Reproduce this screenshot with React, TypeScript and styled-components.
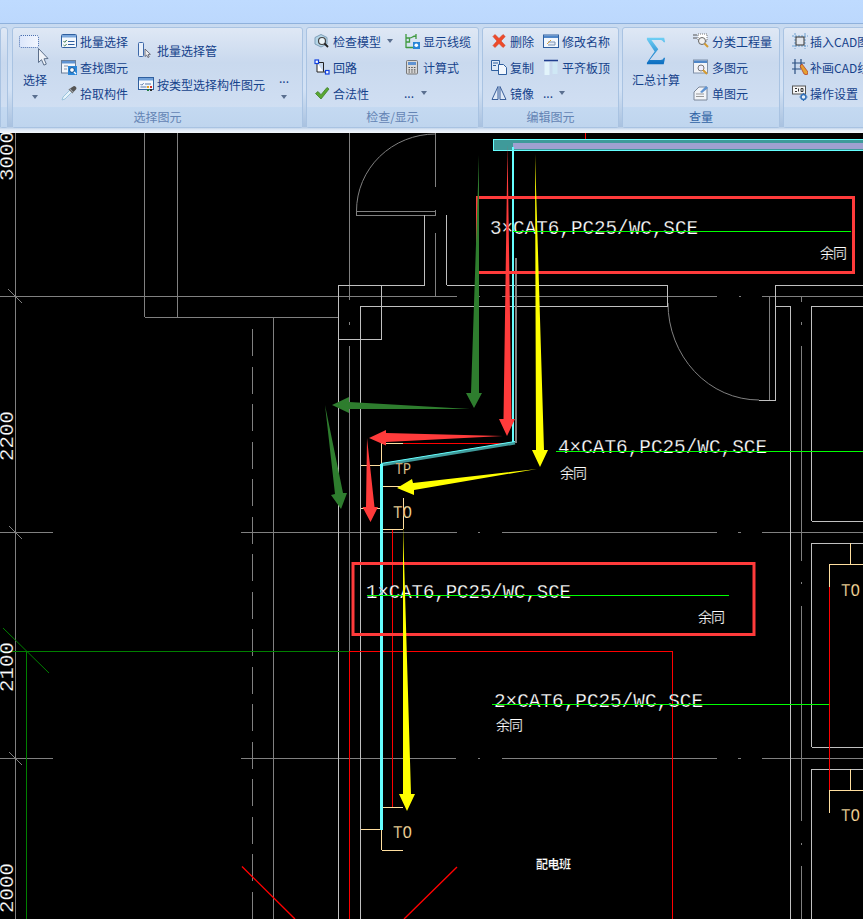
import React from 'react';
import styled, { createGlobalStyle } from 'styled-components';

const Global = createGlobalStyle`
  html, body { margin: 0; padding: 0; background: #000; }
  body { font-family: "Noto Sans CJK SC", "Liberation Sans", sans-serif; }
`;

const Page = styled.div`
  width: 863px; height: 919px; overflow: hidden;
  display: flex; flex-direction: column; background: #000;
`;
const TopBand = styled.div`
  height: 24px; flex: none;
  background: linear-gradient(#bfdbff, #bcd8fd);
  border-bottom: 1px solid #8fb1dc;
  box-sizing: border-box;
`;
const Ribbon = styled.div`
  height: 109px; flex: none; box-sizing: border-box;
  padding-top: 3px; display: flex; gap: 3px; overflow: hidden;
  background: linear-gradient(#c8daf0, #d3e2f5 60%, #a9c2e0 94%, #dfe9f6 97%, #f4f7fb);
`;
const Group = styled.section<{ $w: number; $mr?: number }>`
  width: ${p => p.$w}px; flex: none; height: 101px; box-sizing: border-box;
  margin-right: ${p => p.$mr ?? 0}px;
  display: flex; flex-direction: column;
  border: 1px solid #a9c3e2; border-radius: 3px;
  background: linear-gradient(#dfe8f5, #c9d9ee 35%, #d3e1f4);
`;
const GroupBody = styled.div`
  height: 79px; flex: none; display: flex; box-sizing: border-box;
`;
const GroupTitle = styled.div<{ $dark?: boolean }>`
  flex: 1; display: flex; align-items: center; justify-content: center;
  background: linear-gradient(#c4d9f1, #bfd5ee);
  color: ${p => (p.$dark ? '#2f62a4' : '#6484b4')}; font-size: 12px; line-height: 20px;
`;
const Column = styled.div<{ $ml: number; $top?: number; $gap?: number }>`
  display: flex; flex-direction: column; flex: none;
  margin-left: ${p => p.$ml}px;
  padding-top: ${p => p.$top ?? 0}px;
  gap: ${p => p.$gap ?? 0}px;
`;
const Item = styled.div<{ $gap?: number }>`
  height: 26px; display: flex; align-items: center;
  gap: ${p => p.$gap ?? 3}px;
  color: #15428b; font-size: 12px; white-space: nowrap;
  svg { flex: none; }
`;
const LargeButton = styled.div<{ $w: number; $ml: number }>`
  width: ${p => p.$w}px; margin-left: ${p => p.$ml}px; flex: none;
  display: flex; flex-direction: column; align-items: center;
  color: #15428b; font-size: 12px;
`;
const LargeIcon = styled.div<{ $pt?: number }>`
  height: 36px; box-sizing: border-box; margin-top: 7px;
  padding-top: ${p => p.$pt ?? 0}px;
  display: flex; align-items: flex-start; justify-content: center;
`;
const LargeLabel = styled.div`
  height: 18px; line-height: 18px; white-space: nowrap;
`;
const Caret = styled.i<{ $m?: number; $t?: number }>`
  display: block; width: 0; height: 0; flex: none;
  margin-left: ${p => p.$m ?? 0}px;
  margin-top: ${p => p.$t ?? 0}px;
  border-left: 3.5px solid transparent; border-right: 3.5px solid transparent;
  border-top: 4px solid #5a6f8f;
`;
const Dots = styled.span`
  display: block; line-height: 12px; color: #15428b;
`;
const MoreCol = styled.div<{ $ml: number }>`
  margin-left: ${p => p.$ml}px; flex: none; width: 12px; padding-top: 44px;
  display: flex; flex-direction: column; align-items: center; gap: 11px;
  color: #15428b; font-size: 12px;
`;
const Canvas = styled.svg`
  display: block; flex: 1; width: 863px; min-height: 0; background: #000;
`;

/* ---------- ribbon icons ---------- */
const Svg: React.FC<{ w?: number; h?: number; children: React.ReactNode }> = ({ w = 16, h = 16, children }) => (
  <svg width={w} height={h} viewBox={`0 0 ${w} ${h}`} fill="none">{children}</svg>
);
const blue = '#2f5f9f';
const SelectLarge = () => (
  <Svg w={32} h={32}>
    <defs><linearGradient id="sl" x1="0" x2="1"><stop offset="0" stopColor="#dbe6fb" /><stop offset="1" stopColor="#f2f6fe" /></linearGradient></defs>
    <rect x="0.5" y="0.5" width="19" height="12" rx="1.5" fill="url(#sl)" stroke="#4a6fb0" strokeDasharray="1 1" />
    <path d="M19.5 13.5v14l3-2.800 2.400 5.400 2.400-1-2.300-5.300 4-.3z" fill="#eef2f8" stroke="#5c6f8a" />
  </Svg>
);
const ListCheck = () => (
  <Svg>
    <rect x="0.5" y="1.5" width="15" height="13" rx="1" fill="#f4f8fd" stroke={blue} />
    <rect x="1" y="2" width="14" height="2.5" fill="#7ba7dc" />
    <path d="M2.5 8l1.2 1.3 2-2.3M2.5 12l1.2 1 2-2" stroke="#3b7a4a" />
    <path d="M7 8.5h6.5M7 11.5h6.5" stroke={blue} />
  </Svg>
);
const FindEl = () => (
  <Svg>
    <rect x="0.5" y="1.5" width="14" height="12.5" fill="#f2f6fb" stroke="#6a7f9a" />
    <rect x="1" y="2" width="13" height="2.5" fill="#5f93d2" />
    <path d="M3 7h4M3 10h3" stroke="#8a97a8" />
    <rect x="7" y="7" width="9" height="9" fill="#2a86d8" />
    <circle cx="11" cy="11" r="2.4" fill="#fff" stroke="#104f90" />
    <path d="M13 13l2 2" stroke="#fff" strokeWidth="1.5" />
  </Svg>
);
const Dropper = () => (
  <Svg>
    <path d="M1 15l1-3L9 5l2 2-7 7z" fill="#e6f3fb" stroke="#9cc4dc" />
    <path d="M9 3.5l3.5 3.5 2.2-2.2a1.6 1.6 0 0 0-3-3z" fill="#555" />
    <path d="M8 4l4 4" stroke="#777" strokeWidth="1.5" />
  </Svg>
);
const PipeCursor = () => (
  <Svg w={14} h={16}>
    <rect x="0.5" y="0.5" width="5" height="14" rx="1" fill="#e8f0fb" stroke="#3d68a8" />
    <path d="M7 7v7.5l1.7-1.4 1.2 2.4 1.3-.6-1.1-2.4 2.3-.2z" fill="#eee" stroke="#556" strokeWidth=".8" />
  </Svg>
);
const ListColor = () => (
  <Svg>
    <rect x="0.5" y="1.5" width="15" height="12" fill="#f4f8fd" stroke={blue} />
    <rect x="1" y="2" width="14" height="2.5" fill="#6f9fd8" />
    <path d="M2.5 8l1.2 1.2 2-2M7 8h6M2.5 11h6" stroke="#5a7aa8" />
    <rect x="9" y="10" width="2" height="2" fill="#e8a020" /><rect x="12" y="10" width="2" height="2" fill="#d03030" />
    <rect x="9" y="13" width="2" height="2" fill="#208040" /><rect x="12" y="13" width="2" height="2" fill="#303030" />
  </Svg>
);
const CheckModel = () => (
  <Svg>
    <path d="M1 4.5L7 1.5l6 3V11l-6 3-6-3z" fill="#b5d6e8" stroke="#7f9fb8" />
    <circle cx="8" cy="8" r="3.5" fill="#eaf3f8" stroke="#444" strokeWidth="1.2" />
    <path d="M10.5 10.5l3.5 3.5" stroke="#222" strokeWidth="1.8" />
  </Svg>
);
const Loop = () => (
  <Svg>
    <path d="M3 3.5h6.5V13H13" fill="none" stroke="#222" />
    <path d="M3 3.5V13h6.5" fill="#fff" stroke="#222" />
    <rect x="1" y="1" width="3.5" height="3.5" fill="#fff" stroke="#1040e0" strokeWidth="1.2" />
    <rect x="11.5" y="11.5" width="3.5" height="3.5" fill="#fff" stroke="#1040e0" strokeWidth="1.2" />
  </Svg>
);
const Check = () => (
  <Svg>
    <path d="M1.5 8.5l2.5-2 3 3.2L13 2.5l2 1.5-8 10z" fill="#5aa832" stroke="#3f7f2a" strokeWidth=".8" />
  </Svg>
);
const Cable = () => (
  <Svg>
    <path d="M2 1v14M2 14.5h13M2 5h3.5v4H2M5.500 5c3 0 3-2 6-2M12 1v5" stroke="#3f9a3f" strokeWidth="1.3" />
    <rect x="9" y="9" width="7" height="7" fill="#2a86d8" />
    <circle cx="12.300" cy="12.300" r="1.800" fill="#fff" />
  </Svg>
);
const Calc = () => (
  <Svg>
    <rect x="2.5" y="1.5" width="11" height="13.500" rx="1" fill="#d9d9d9" stroke="#777" />
    <rect x="4" y="3" width="8" height="3" fill="#5f93d2" />
    <path d="M4.500 8.500h1.500m1.200 0h1.500m1.200 0h1.500M4.500 10.800h1.500m1.200 0h1.500m1.200 0h1.500M4.500 13h1.500m1.200 0h1.500m1.200 0h1.500" stroke="#555" strokeWidth="1.200" />
  </Svg>
);
const Del = () => (
  <Svg>
    <path d="M2 3.500l2-2 4 4 4-4 2.200 2-4.200 4.500 4.200 4.500-2.200 2-4-4-4 4-2-2L6 8z" fill="#ee4a2a" stroke="#d03a20" strokeWidth=".6" />
  </Svg>
);
const Rename = () => (
  <Svg>
    <rect x="0.5" y="2" width="15" height="12.500" fill="#f4f8fd" stroke={blue} />
    <rect x="1" y="2.500" width="14" height="2.500" fill="#4f86c8" />
    <path d="M5 9h7v3H5" fill="#e7eef8" stroke="#7a93b4" />
    <path d="M4 11l4-4" stroke="#d7a040" />
  </Svg>
);
const Copy = () => (
  <Svg>
    <path d="M.5 1.500h8v10h-8z" fill="#dce9f7" stroke={blue} />
    <path d="M7.500 5.500h5l3 3v7h-8z" fill="#f2f7fd" stroke={blue} />
    <path d="M2 4h5M2 6.500h3" stroke={blue} />
  </Svg>
);
const AlignTop = () => (
  <Svg>
    <path d="M1 1.500h14" stroke="#1f3f8f" strokeWidth="1.500" />
    <rect x="1.500" y="3" width="5" height="13" fill="#e2f4fb" />
    <rect x="9.500" y="3" width="5" height="12" fill="#cfe8f5" />
  </Svg>
);
const Mirror = () => (
  <Svg>
    <path d="M7 1.500L1 14.500h6zM9 1.500l6 13H9z" fill="#dfe9f6" stroke="#3a5f9a" />
  </Svg>
);
const Sigma = () => (
  <svg width={20} height={28} viewBox="0 0 22 29">
    <defs><linearGradient id="sg" x1="0" y1="0" x2="0" y2="1"><stop offset="0" stopColor="#6fd0f5" /><stop offset="1" stopColor="#0a6cc0" /></linearGradient></defs>
    <path d="M1 0h19l1 5h-1.500c-1-2-2.500-2.500-4-2.500H6l7.500 10L4 24.500h12c2 0 3-1 3.500-2.500H21l-1.500 7H1v-1.500L9.500 15 1 2z" fill="url(#sg)" />
  </svg>
);
const Classify = () => (
  <Svg>
    <path d="M0 2h4M0 5h4" stroke="#555" />
    <rect x="5" y="1" width="9" height="7" fill="#fff" stroke="#777" strokeDasharray="1 1" />
    <circle cx="9" cy="8" r="3.500" fill="#f2f2f2" stroke="#666" />
    <path d="M11.500 10.500l3.500 3.500" stroke="#d49a30" strokeWidth="2" />
  </Svg>
);
const Multi = () => (
  <Svg>
    <rect x="0.500" y="1" width="14" height="13" fill="#f2f4f8" stroke="#8090a8" />
    <rect x="1" y="1.500" width="13" height="2.500" fill="#4f86c8" />
    <circle cx="8" cy="9" r="3" fill="#eef" stroke="#777" />
    <path d="M10 11l4 4" stroke="#d49a30" strokeWidth="2" />
  </Svg>
);
const Single = () => (
  <Svg>
    <path d="M1 7l5-5 8 0v13H1z" fill="#f2f4f8" stroke="#7a8698" />
    <path d="M3 9h8M3 11.500h8" stroke="#999" />
    <path d="M7 7l6-6 2 2-6 5z" fill="#5f93d2" />
  </Svg>
);
const InsertCad = () => (
  <Svg>
    <path d="M3 0v16M13 0v16M0 3h16M0 13h16" stroke="#6fa0d0" strokeDasharray="2 1" />
    <rect x="4" y="4" width="8" height="8" fill="#e2e6ec" stroke="#333" />
  </Svg>
);
const DrawCad = () => (
  <Svg>
    <path d="M3 0v15M9 0v9M0 4h13M0 10h9" stroke="#2a4f80" strokeWidth="1.200" />
    <path d="M8 7l2-2 6 8-1 3-3-1z" fill="#e5a030" stroke="#b03020" strokeWidth=".7" />
  </Svg>
);
const CadSettings = () => (
  <Svg>
    <rect x="0.500" y="1" width="13" height="8" fill="#f6f6f6" stroke="#555" />
    <path d="M3 3.500h2M3 6.500h2M6.500 3.500v3M9 3.500h2v3H9z" stroke="#333" />
    <circle cx="11.500" cy="12" r="2.500" fill="#e8f0fa" stroke="#2f6fb8" strokeWidth="1.500" />
    <path d="M11.500 8v1M11.500 15v1M7.500 12h1M14.500 12h1" stroke="#2f6fb8" strokeWidth="1.200" />
  </Svg>
);

/* ---------- CAD canvas drawing ---------- */
const grey = '#808080', light = '#c0c0c0', beige = '#ffdf9f', bred = '#ff3b3b', dgreen = '#2e7d2e';

type Seg = [number, number, number, number];
const Lines: React.FC<{ color: string; segs: Seg[]; w?: number }> = ({ color, segs, w = 1 }) => (
  <path
    d={segs.map(([a, b, c, d]) => `M${a} ${b}L${c} ${d}`).join('')}
    stroke={color} strokeWidth={w} fill="none"
    shapeRendering="crispEdges"
  />
);
const Diag: React.FC<{ color: string; segs: Seg[]; w?: number }> = ({ color, segs, w = 1 }) => (
  <path d={segs.map(([a, b, c, d]) => `M${a} ${b}L${c} ${d}`).join('')} stroke={color} strokeWidth={w} fill="none" />
);

/* The black stroke painted over the fill thins the glyphs to the hairline look of CAD text. */
const CadLabel: React.FC<{ x: number; y: number; len: number; size?: number; color?: string; children: string }> = ({ x, y, len, size = 21, color = '#fff', children }) => (
  <text x={x} y={y} fontFamily='"Liberation Mono", monospace' fontSize={size} fill={color} stroke="#000" strokeWidth={0.25} textLength={len} lengthAdjust="spacingAndGlyphs">{children}</text>
);
const CadNote: React.FC<{ x: number; y: number; len?: number; size?: number; weight?: number; children: string }> = ({ x, y, len = 27, size = 18, weight = 400, children }) => (
  <text x={x} y={y} fontFamily='"Noto Sans CJK SC", sans-serif' fontSize={size} fontWeight={weight} fill="#fff" stroke="#000" strokeWidth={0.2} textLength={len} lengthAdjust="spacing">{children}</text>
);
const AxisLabel: React.FC<{ y: number; children: string }> = ({ y, children }) => (
  <text transform={`translate(13 ${y}) rotate(-90)`} fontFamily='"Liberation Mono", monospace' fontSize={21} fill="#fff" stroke="#000" strokeWidth={0.25} textLength={50} lengthAdjust="spacingAndGlyphs">{children}</text>
);

const arrows: { color: string; pts: string }[] = [
  { color: dgreen, pts: '479,155 479,393 482,393 474,408 466,393 471,393' },
  { color: dgreen, pts: '470,409 349,409 349,413 332,405 349,397 349,402' },
  { color: dgreen, pts: '325,405 343,493 347,493 341,509 331,495 335,494' },
  { color: bred, pts: '507.500,145 511.500,419 515,419 507,436 499,419 503.500,419' },
  { color: bred, pts: '503,436 386,442 386,445.500 369,438 386,430 386,433' },
  { color: bred, pts: '367,438 374.500,507 378,507 370.500,522 362.500,507 366,507' },
  { color: '#ffff00', pts: '535,154 544,450 548,450 540,467 532,450 536,450' },
  { color: '#ffff00', pts: '537,469 414,490 414,495 397,488 412,479 413,483' },
  { color: '#ffff00', pts: '403,525 411,794 415,794 407,811 399,794 403,794' },
];

const CadDrawing = () => (
  <Canvas viewBox="0 133 863 786">
    <Lines color={grey} segs={[
      [15.5, 133, 15.5, 919], [144.5, 133, 144.5, 317], [177.5, 133, 177.5, 317],
      [0, 296.5, 457, 296.5], [476, 296.5, 480, 296.5], [502, 296.5, 717, 296.5], [739, 296.5, 741, 296.5], [762, 296.5, 863, 296.5],
      [144.5, 317.5, 338, 317.5], [273.5, 317, 273.5, 919],
      [0, 532.5, 53, 532.5], [241, 532.5, 457, 532.5], [478, 532.5, 480, 532.5], [502, 532.5, 717, 532.5], [738, 532.5, 741, 532.5], [762, 532.5, 863, 532.5],
      [0, 758.5, 53, 758.5], [241, 758.5, 456, 758.5], [478, 758.5, 480, 758.5], [502, 758.5, 717, 758.5], [738, 758.5, 741, 758.5], [762, 758.5, 863, 758.5],
      [349.5, 133, 349.5, 300], [349.5, 322, 349.5, 325], [349.5, 346, 349.5, 652],
      [435.5, 233, 435.5, 296], [769.5, 296, 769.5, 400],
      [801.5, 296, 801.5, 302], [801.5, 322, 801.5, 325], [801.5, 346, 801.5, 561], [801.5, 582, 801.5, 584], [801.5, 606, 801.5, 821], [801.5, 843, 801.5, 845], [801.5, 866, 801.5, 919],
      [435.5, 133, 435.5, 187], [435.5, 210, 435.5, 215],
      [356.5, 211.5, 435.5, 211.5], [356.5, 215.5, 435.5, 215.5], [356.5, 211, 356.5, 216],
    ]} />
    <path d="M252.500 329V919" stroke={grey} strokeDasharray="27 10.500" shapeRendering="crispEdges" />
    <path d="M435.500 134A79 77 0 0 0 356.500 211" stroke={grey} fill="none" />
    <path d="M668 303A91 97 0 0 0 759 400" stroke={grey} fill="none" />
    <Diag color={grey} segs={[[8, 289, 22, 303], [9, 526, 22, 539], [9, 752, 22, 765]]} />

    <Lines color={light} segs={[
      [424.5, 215, 424.5, 285], [446.5, 215, 446.5, 285],
      [338, 285.5, 424.5, 285.5], [446.5, 285.5, 667.5, 285.5], [667.5, 285, 667.5, 306],
      [338.5, 285, 338.5, 919], [381.5, 285, 381.5, 339], [338, 339.5, 381.5, 339.5],
      [360.5, 306, 360.5, 919], [360.5, 306.5, 667.5, 306.5],
      [759, 400.5, 775.5, 400.5], [775.5, 285, 775.5, 400], [775.5, 285.5, 863, 285.5], [775.5, 306.5, 790.5, 306.5],
      [790.5, 306, 790.5, 919], [811.5, 306, 811.5, 521], [811.5, 306.5, 863, 306.5], [811.5, 521.5, 863, 521.5],
      [811.5, 543, 811.5, 747], [811.5, 543.5, 863, 543.5], [811.5, 747.5, 863, 747.5],
      [811.5, 769, 811.5, 919], [811.5, 769.5, 863, 769.5],
    ]} />

    <Lines color="#008000" segs={[[0, 651.5, 349, 651.5], [26.5, 652, 26.5, 919]]} />
    <Diag color="#008000" segs={[[3, 628, 49, 673]]} />
    <Lines color="#ff0000" segs={[
      [349, 651.5, 672.5, 651.5], [349.5, 652, 349.5, 919], [672.5, 652, 672.5, 919],
      [392.5, 529, 392.5, 807], [829.5, 587, 829.5, 790], [585.5, 133, 585.5, 139], [403, 443.5, 510, 443.5],
    ]} />
    <Diag color="#ff0000" w={1.4} segs={[[242, 866.5, 295, 919], [457, 867, 404, 919]]} />

    <Lines color={beige} segs={[
      [381.5, 443, 381.5, 465], [381.5, 443.5, 403, 443.5], [360.5, 465.5, 381.5, 465.5], [381.5, 486.5, 400, 486.5],
      [403.5, 498, 403.5, 529], [360.5, 508.5, 381.5, 508.5], [382, 529.5, 403, 529.5],
      [382, 807.5, 403, 807.5], [360.5, 829.5, 381, 829.5], [381.5, 830, 381.5, 850], [381.5, 850.5, 403, 850.5],
      [850.5, 543, 850.5, 564], [829.5, 564.5, 863, 564.5], [829.5, 564, 829.5, 587],
      [850.5, 769, 850.5, 790], [829.5, 790.5, 863, 790.5], [829.5, 790, 829.5, 813],
    ]} />

    <rect x="493.500" y="139.500" width="370" height="11" fill="#3f9a9a" stroke="#66ffff" />
    <rect x="513" y="143" width="350" height="6" fill="#a0a0d0" />
    <Lines color={grey} w={2} segs={[[515.5, 258, 515.5, 443]]} />
    <Lines color="#66ffff" w={2} segs={[[513, 147, 513, 443]]} />
    <Diag color="#3f9a9a" w={3} segs={[[515, 443, 381, 465]]} />
    <Diag color="#66ffff" w={1} segs={[[515, 441.5, 381, 463.5]]} />
    <Lines color="#66ffff" w={3} segs={[[381.5, 464, 381.5, 830]]} />

    <CadLabel x={490} y={234} len={208}>3×CAT6,PC25/WC,SCE</CadLabel>
    <CadLabel x={558} y={453} len={209}>4×CAT6,PC25/WC,SCE</CadLabel>
    <CadLabel x={366} y={598} len={205}>1×CAT6,PC25/WC,SCE</CadLabel>
    <CadLabel x={494} y={707} len={209}>2×CAT6,PC25/WC,SCE</CadLabel>
    <Lines color="#00ff00" segs={[[513, 231.5, 851, 231.5], [556, 451.5, 863, 451.5], [367, 595.5, 729, 595.5], [492, 704.5, 829, 704.5]]} />
    <CadNote x={820} y={258} size={14}>余同</CadNote>
    <CadNote x={560} y={478} size={14}>余同</CadNote>
    <CadNote x={698} y={622} size={14}>余同</CadNote>
    <CadNote x={496} y={730} size={14}>余同</CadNote>
    <CadNote x={536} y={869} len={35} size={12} weight={700}>配电班</CadNote>

    <CadLabel x={395} y={474} len={16} size={16} color={beige}>TP</CadLabel>
    <CadLabel x={393} y={518} len={19} size={18} color={beige}>TO</CadLabel>
    <CadLabel x={393} y={838} len={19} size={18} color={beige}>TO</CadLabel>
    <CadLabel x={841} y={596} len={19} size={18} color={beige}>TO</CadLabel>
    <CadLabel x={841} y={821} len={19} size={18} color={beige}>TO</CadLabel>

    <AxisLabel y={181}>3000</AxisLabel>
    <AxisLabel y={461}>2200</AxisLabel>
    <AxisLabel y={692}>2100</AxisLabel>
    <AxisLabel y={913}>2000</AxisLabel>

    <rect x="477.500" y="197.500" width="376" height="75" fill="none" stroke={bred} strokeWidth="3" />
    <rect x="353" y="563.500" width="401" height="71" fill="none" stroke={bred} strokeWidth="3" />

    {arrows.map(a => <polygon key={a.pts} points={a.pts} fill={a.color} />)}
  </Canvas>
);

export default function App() {
  return (
    <Page>
      <Global />
      <TopBand />
      <Ribbon>
        <Group $w={8} $mr={1}><GroupBody /><GroupTitle /></Group>
        <Group $w={291}>
          <GroupBody>
            <LargeButton $w={36} $ml={4}>
              <LargeIcon><SelectLarge /></LargeIcon>
              <LargeLabel>选择</LargeLabel>
              <Caret $t={6} />
            </LargeButton>
            <Column $ml={8}>
              <Item><ListCheck />批量选择</Item>
              <Item><FindEl />查找图元</Item>
              <Item><Dropper />拾取构件</Item>
            </Column>
            <Column $ml={10} $top={9} $gap={8}>
              <Item $gap={5}><PipeCursor />批量选择管</Item>
              <Item><ListColor />按类型选择构件图元</Item>
            </Column>
            <MoreCol $ml={13}><Dots>...</Dots><Caret /></MoreCol>
          </GroupBody>
          <GroupTitle>选择图元</GroupTitle>
        </Group>
        <Group $w={173}>
          <GroupBody>
            <Column $ml={7}>
              <Item><CheckModel />检查模型<Caret $m={3} /></Item>
              <Item><Loop />回路</Item>
              <Item><Check />合法性</Item>
            </Column>
            <Column $ml={11}>
              <Item><Cable />显示线缆</Item>
              <Item><Calc />计算式</Item>
              <Item $gap={7}><Dots>...</Dots><Caret /></Item>
            </Column>
          </GroupBody>
          <GroupTitle>检查/显示</GroupTitle>
        </Group>
        <Group $w={137}>
          <GroupBody>
            <Column $ml={8}>
              <Item><Del />删除</Item>
              <Item><Copy />复制</Item>
              <Item><Mirror />镜像</Item>
            </Column>
            <Column $ml={9}>
              <Item><Rename />修改名称</Item>
              <Item><AlignTop />平齐板顶</Item>
              <Item $gap={6}><Dots>...</Dots><Caret /></Item>
            </Column>
          </GroupBody>
          <GroupTitle>编辑图元</GroupTitle>
        </Group>
        <Group $w={158}>
          <GroupBody>
            <LargeButton $w={50} $ml={8}>
              <LargeIcon $pt={2}><Sigma /></LargeIcon>
              <LargeLabel>汇总计算</LargeLabel>
            </LargeButton>
            <Column $ml={12}>
              <Item><Classify />分类工程量</Item>
              <Item><Multi />多图元</Item>
              <Item><Single />单图元</Item>
            </Column>
          </GroupBody>
          <GroupTitle $dark>查量</GroupTitle>
        </Group>
        <Group $w={120}>
          <GroupBody>
            <Column $ml={8}>
              <Item $gap={2}><InsertCad />插入CAD图</Item>
              <Item $gap={2}><DrawCad />补画CAD线</Item>
              <Item $gap={2}><CadSettings />操作设置</Item>
            </Column>
          </GroupBody>
          <GroupTitle />
        </Group>
      </Ribbon>
      <CadDrawing />
    </Page>
  );
}
